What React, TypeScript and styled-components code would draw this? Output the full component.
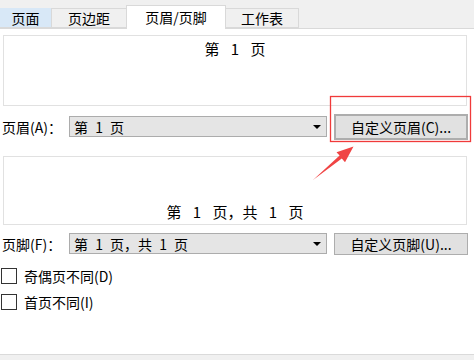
import React from "react";
import styled, { createGlobalStyle } from "styled-components";

const GlobalStyle = createGlobalStyle`
  html, body { margin: 0; padding: 0; background: #ffffff; }
  body { font-family: "Noto Sans CJK SC", "Noto Sans", sans-serif; color: #000; }
  * { box-sizing: border-box; }
`;

const Page = styled.div`
  position: relative;
  width: 474px;
  height: 360px;
  display: flex;
  flex-direction: column;
  background: #ffffff;
  overflow: hidden;
`;

const TabBar = styled.div`
  height: 29px;
  flex: none;
  display: flex;
  align-items: flex-end;
  background: #f0f0f0;
  border-bottom: 1px solid #d9d9d9;
`;

const Tab = styled.div<{ $w: number; $active?: boolean; $hover?: boolean }>`
  width: ${(p) => p.$w}px;
  height: ${(p) => (p.$active ? 24 : 20)}px;
  margin-bottom: ${(p) => (p.$active ? -1 : 0)}px;
  display: flex;
  align-items: center;
  justify-content: center;
  font-size: 14px;
  line-height: 1;
  background: ${(p) => (p.$active ? "#ffffff" : p.$hover ? "#d8e8f7" : "#f0f0f0")};
  border: 1px solid #d9d9d9;
  border-left: ${(p) => (p.$hover ? "none" : "1px solid #d9d9d9")};
  border-bottom: ${(p) => (p.$active ? "none" : "1px solid #d9d9d9")};
  border-top-color: ${(p) => (p.$hover ? "#d8e8f7" : "#d9d9d9")};
  & + & { margin-left: -1px; }
  padding-bottom: ${(p) => (p.$active ? 2 : 0)}px;
`;

const Content = styled.div`
  flex: 1;
  display: flex;
  flex-direction: column;
  padding: 6px 0 0 3px;
`;

const Preview = styled.div<{ $h: number; $mt?: number; $bottom?: boolean }>`
  width: 464px;
  height: ${(p) => p.$h}px;
  margin-top: ${(p) => p.$mt ?? 0}px;
  border: 1px solid #e1e1e1;
  display: flex;
  justify-content: center;
  align-items: ${(p) => (p.$bottom ? "flex-end" : "flex-start")};
  padding: ${(p) => (p.$bottom ? "0 0 2px 0" : "3px 0 0 0")};
  font-size: 15px;
  line-height: 20px;
  word-spacing: 8px;
  white-space: pre;
`;

const Row = styled.div<{ $mt: number; $h: number }>`
  margin-top: ${(p) => p.$mt}px;
  margin-left: -1px;
  height: ${(p) => p.$h}px;
  display: flex;
  align-items: center;
`;

const Label = styled.div`
  width: 67px;
  font-size: 14px;
  white-space: nowrap;
`;

const Combo = styled.div`
  width: 258px;
  height: 21px;
  background: #e5e5e5;
  border: 1px solid #acacac;
  display: flex;
  align-items: center;
  padding: 0 0 0 4px;
  font-size: 14px;
  word-spacing: 4px;
  white-space: pre;
`;

const ComboText = styled.span`
  flex: 1;
`;

const Caret = styled.span`
  width: 0;
  height: 0;
  border-left: 4px solid transparent;
  border-right: 4px solid transparent;
  border-top: 4px solid #000;
  margin-right: 5px;
`;

const Button = styled.div<{ $h: number; $thick?: boolean }>`
  width: 134px;
  height: ${(p) => p.$h}px;
  margin-left: 7px;
  background: #e1e1e1;
  border: ${(p) => (p.$thick ? 2 : 1)}px solid #adadad;
  display: flex;
  align-items: center;
  justify-content: center;
  font-size: 14px;
  white-space: nowrap;
`;

const CheckRow = styled.label<{ $mt: number }>`
  margin-top: ${(p) => p.$mt}px;
  margin-left: -2px;
  display: flex;
  align-items: center;
  gap: 7px;
  font-size: 14px;
  height: 16px;
`;

const Box = styled.span`
  width: 16px;
  height: 16px;
  border: 1px solid #333333;
  background: #ffffff;
`;

const BottomBar = styled.div`
  flex: none;
  height: 6px;
  background: #f0f0f0;
  border-top: 1px solid #dadada;
`;

const Overlay = styled.svg`
  position: absolute;
  left: 0;
  top: 0;
  pointer-events: none;
`;

export default function App() {
  return (
    <Page>
      <GlobalStyle />
      <TabBar>
        <Tab $w={52} $hover>页面</Tab>
        <Tab $w={76}>页边距</Tab>
        <Tab $w={100} $active>页眉/页脚</Tab>
        <Tab $w={74}>工作表</Tab>
      </TabBar>
      <Content>
        <Preview $h={71}>第 1 页</Preview>
        <Row $mt={7} $h={27}>
          <Label>页眉(A)：</Label>
          <Combo>
            <ComboText>第 1 页</ComboText>
            <Caret />
          </Combo>
          <Button $h={26} $thick>自定义页眉(C)...</Button>
        </Row>
        <Preview $h={69} $mt={16} $bottom>
          第 1 页，共 1 页
        </Preview>
        <Row $mt={7} $h={23}>
          <Label>页脚(F)：</Label>
          <Combo>
            <ComboText>第 1 页，共 1 页</ComboText>
            <Caret />
          </Combo>
          <Button $h={22}>自定义页脚(U)...</Button>
        </Row>
        <CheckRow $mt={13}>
          <Box />
          奇偶页不同(D)
        </CheckRow>
        <CheckRow $mt={10}>
          <Box />
          首页不同(I)
        </CheckRow>
      </Content>
      <BottomBar />
      <Overlay width="474" height="360" viewBox="0 0 474 360">
        <rect x="330.5" y="96.5" width="140" height="45" fill="none" stroke="#f03a3a" strokeWidth="1.3" />
        <polygon
          points="313,180 341.8,158.6 345,162.2 353.5,146.5 336.5,152.2 339.6,155.6"
          fill="#f04444"
        />
      </Overlay>
    </Page>
  );
}
